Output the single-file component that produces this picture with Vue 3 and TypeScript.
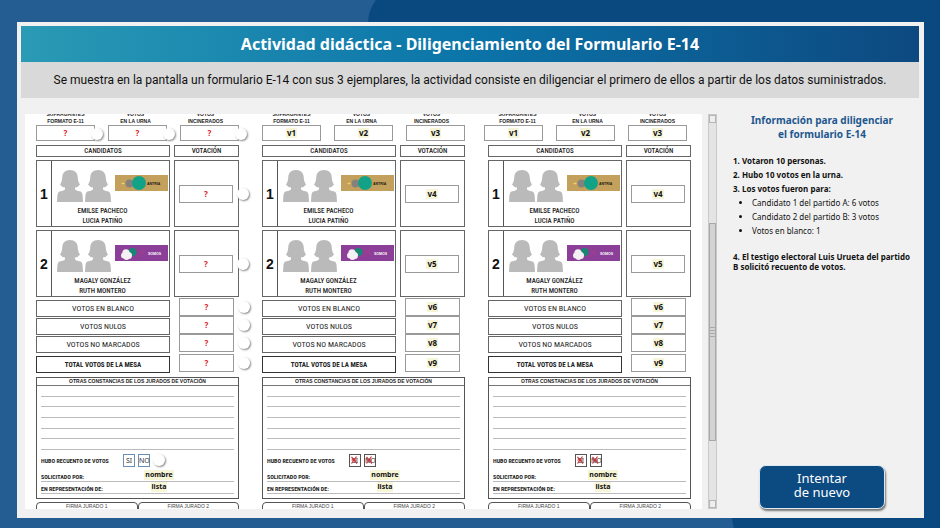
<script setup lang="ts">
interface Candidate {
  id: number
  names: string[]
  party: 'gold' | 'purple'
  value: string
}

interface Row {
  label: string
  value: string
  total?: boolean
}

interface Form {
  id: number
  editable: boolean
}

const forms: Form[] = [
  { id: 1, editable: true },
  { id: 2, editable: false },
  { id: 3, editable: false },
]

const counters = [
  { lines: ['SUFRAGANTES', 'FORMATO E-11'], value: 'v1' },
  { lines: ['VOTOS', 'EN LA URNA'], value: 'v2' },
  { lines: ['VOTOS', 'INCINERADOS'], value: 'v3' },
]

const candidates: Candidate[] = [
  { id: 1, names: ['EMILSE PACHECO', 'LUCIA PATIÑO'], party: 'gold', value: 'v4' },
  { id: 2, names: ['MAGALY GONZÁLEZ', 'RUTH MONTERO'], party: 'purple', value: 'v5' },
]

const rows: Row[] = [
  { label: 'VOTOS EN BLANCO', value: 'v6' },
  { label: 'VOTOS NULOS', value: 'v7' },
  { label: 'VOTOS NO MARCADOS', value: 'v8' },
  { label: 'TOTAL VOTOS DE LA MESA', value: 'v9', total: true },
]

const choices = ['SI', 'NO']
</script>

<template>
  <div class="page">
    <svg class="backdrop" viewBox="0 0 940 528" preserveAspectRatio="none" aria-hidden="true">
      <rect width="940" height="528" fill="#235d91" />
      <path d="M376 0Q368 10 368 24V300H728Q726 505 734 528H940V0Z" fill="#0a4880" />
    </svg>

    <main class="panel">
      <h1 class="title">Actividad didáctica - Diligenciamiento del Formulario E-14</h1>
      <p class="intro">
        Se muestra en la pantalla un formulario E-14 con sus 3 ejemplares, la actividad consiste en
        diligenciar el primero de ellos a partir de los datos suministrados.
      </p>

      <div class="content">
        <section class="viewer">
          <div class="sheet">
            <article v-for="form in forms" :key="form.id" class="form" :class="'form-' + form.id">
              <div class="labels">
                <div v-for="c in counters" :key="c.value" class="label">
                  <div v-for="line in c.lines" :key="line">{{ line }}</div>
                </div>
              </div>
              <div class="counters">
                <div v-for="c in counters" :key="c.value" class="cell">
                  <button v-if="form.editable" type="button" class="value ask">?<i class="curl inner"></i></button>
                  <div v-else class="value"><span class="tag">{{ c.value }}</span></div>
                </div>
              </div>

              <div class="pair heads">
                <div class="box">CANDIDATOS</div>
                <div class="box">VOTACIÓN</div>
              </div>

              <div v-for="cand in candidates" :key="cand.id" class="pair candidate">
                <div class="box card">
                  <div class="number">{{ cand.id }}</div>
                  <div class="who">
                    <div class="pictures">
                      <svg v-for="n in 2" :key="n" class="person" viewBox="0 0 26 32" aria-hidden="true">
                        <path d="M13 0C8 0 5.500 3 5.300 7C5.100 10 4.500 12.500 3 14.500Q4.500 17 8 17.500V19.500Q6.500 21 2.500 21.500Q0.500 22 0.300 27L0 32H26L25.700 27Q25.500 22 23.500 21.500Q19.500 21 18 19.500V17.500Q21.500 17 23 14.500C21.500 12.500 20.900 10 20.700 7C20.500 3 18 0 13 0Z" fill="#bababa" />
                      </svg>
                      <svg class="logo" viewBox="0 0 53 16" aria-hidden="true">
                        <template v-if="cand.party === 'gold'">
                          <rect width="53" height="16" fill="#c3a05c" />
                          <path d="M6 8.500L8 7.500L10 8.500L8 9.500Z" fill="#f3d264" />
                          <circle cx="14.500" cy="8.500" r="4" fill="#85827e" />
                          <circle cx="24" cy="8" r="7" fill="#12a287" />
                          <text x="32" y="9.500" font-size="3.500" font-weight="700" fill="#1d1a12">ANTRIA</text>
                        </template>
                        <template v-else>
                          <rect width="53" height="16" fill="#8c3f98" />
                          <circle cx="17.500" cy="7" r="4" fill="#178774" />
                          <g fill="#f4f0f4">
                            <circle cx="11" cy="7.800" r="3.600" />
                            <circle cx="9" cy="10.500" r="3" />
                            <circle cx="13.500" cy="10.500" r="3.500" />
                            <circle cx="11.500" cy="12" r="3" />
                          </g>
                          <path d="M22 4L30 10M23 12L29 4" stroke="#a93d86" stroke-width="1" />
                          <text x="33" y="9.500" font-size="3.500" font-weight="700" fill="#ffffff">SOMOS</text>
                        </template>
                      </svg>
                    </div>
                    <div class="names">
                      <div v-for="name in cand.names" :key="name">{{ name }}</div>
                    </div>
                  </div>
                </div>
                <div class="box vote">
                  <button v-if="form.editable" type="button" class="value ask">?<i class="curl outer"></i></button>
                  <div v-else class="value"><span class="tag">{{ cand.value }}</span></div>
                </div>
              </div>

              <div class="rows">
                <div v-for="row in rows" :key="row.value" class="pair row" :class="{ total: row.total }">
                  <div class="box name">{{ row.label }}</div>
                  <div class="slot">
                    <button v-if="form.editable" type="button" class="value ask">?<i class="curl outer"></i></button>
                    <div v-else class="value"><span class="tag">{{ row.value }}</span></div>
                  </div>
                </div>
              </div>

              <div class="notes">
                <div class="notes-head">OTRAS CONSTANCIAS DE LOS JURADOS DE VOTACIÓN</div>
                <div class="rules">
                  <div v-for="n in 6" :key="n" class="rule"></div>
                </div>
                <div class="recount">
                  <span class="recount-label">HUBO RECUENTO DE VOTOS</span>
                  <template v-if="form.editable">
                    <button v-for="c in choices" :key="c" type="button" class="choice pick">{{ c }}</button>
                    <i class="curl still"></i>
                  </template>
                  <template v-else>
                    <span v-for="c in choices" :key="c" class="choice">{{ c }}
                      <svg class="cross" viewBox="0 0 10 10" aria-hidden="true">
                        <path d="M1.500 2L7 8.500M6.500 1.500L1.500 8.500M1.500 5L6.500 5" stroke="#c8373c" stroke-width="1.200" fill="none" />
                      </svg>
                    </span>
                  </template>
                </div>
                <div class="line">
                  <span class="line-label">SOLICITADO POR:</span>
                  <span class="answer"><span class="tag">nombre</span></span>
                </div>
                <div class="line">
                  <span class="line-label">EN REPRESENTACIÓN DE:</span>
                  <span class="answer"><span class="tag">lista</span></span>
                </div>
              </div>

              <div class="signatures">
                <div>FIRMA JURADO 1</div>
                <div>FIRMA JURADO 2</div>
              </div>
            </article>
          </div>
        </section>

        <div class="scrollbar" aria-hidden="true">
          <div class="arrow"></div>
          <div class="track"></div>
          <div class="thumb"><i></i><i></i><i></i><i></i></div>
          <div class="track low"></div>
          <div class="arrow"></div>
        </div>

        <aside class="info">
          <h2>Información para diligenciar<br />el formulario E-14</h2>
          <p>1. Votaron 10 personas.</p>
          <p>2. Hubo 10 votos en la urna.</p>
          <p>3. Los votos fueron para:</p>
          <ul>
            <li>Candidato 1 del partido A: 6 votos</li>
            <li>Candidato 2 del partido B: 3 votos</li>
            <li>Votos en blanco: 1</li>
          </ul>
          <p class="last">4. El testigo electoral Luis Urueta del partido B solicitó recuento de votos.</p>
          <button type="button" class="retry">Intentar<br />de nuevo</button>
        </aside>
      </div>
    </main>
  </div>
</template>

<style>
body {
  margin: 0;
}
</style>

<style scoped>
* {
  box-sizing: border-box;
}

.page {
  position: relative;
  display: flex;
  height: 100vh;
  padding: 22px 16px 10px 17px;
  font-family: "Noto Sans", "Open Sans", sans-serif;
  color: #111;
  overflow: hidden;
}

.backdrop {
  position: absolute;
  inset: 0;
  width: 100%;
  height: 100%;
}

.panel {
  position: relative;
  flex: 1;
  min-width: 0;
  display: flex;
  flex-direction: column;
  padding: 4px 5px 0 4px;
  background: #f1f1f1;
}

.title {
  margin: 0;
  font-size: 16px;
  line-height: 36px;
  font-weight: 700;
  text-align: center;
  color: #fff;
  background: linear-gradient(90deg, #2a9ab5 0%, #0b74a9 50%, #0d4980 100%);
}

.intro {
  margin: 0;
  font-family: Roboto, sans-serif;
  font-size: 12px;
  line-height: 36px;
  text-align: center;
  white-space: nowrap;
  background: #d9d9d9;
}

.content {
  flex: 1;
  min-height: 0;
  display: flex;
  padding: 16px 0 9px 4px;
}

.viewer {
  flex: 1;
  min-width: 0;
  overflow: hidden;
  background: #fff;
}

.sheet {
  display: grid;
  grid-template-columns: repeat(3, 1fr);
  gap: 23px;
  margin-top: -3px;
  padding: 0 11px;
  font-family: "Roboto Condensed", Roboto, "Liberation Sans", sans-serif;
  font-size: 6px;
  color: #222;
}

.labels,
.counters {
  display: grid;
  grid-template-columns: repeat(3, 59px);
}

.labels {
  gap: 11px;
  font-family: "Liberation Sans", Arial, sans-serif;
  font-size: 5px;
  line-height: 7px;
  font-weight: 700;
  text-align: center;
}

.label {
  white-space: nowrap;
}

.counters {
  gap: 13px;
  margin-bottom: 4px;
}

.form-3 .counters {
  margin-left: -4px;
}

.value {
  position: relative;
  display: flex;
  align-items: center;
  justify-content: center;
  width: 100%;
  height: 16px;
  padding: 0;
  border: 1px solid #9a9a9a;
  background: #fff;
  font-family: "Noto Sans", "Open Sans", sans-serif;
  font-size: 8px;
  line-height: 10px;
  font-weight: 700;
  color: #111;
}

.ask {
  color: #d8232a;
}

.tag {
  padding: 0 1px;
  font-family: "Noto Sans", "Open Sans", sans-serif;
  font-size: 8px;
  line-height: 10px;
  font-weight: 700;
  color: #111;
  background: #f6f5d8;
}

.curl {
  width: 12px;
  height: 12px;
  border-radius: 50%;
  background: #fff;
  box-shadow: 1px 1px 2px #888;
}

.inner {
  position: absolute;
  right: -9px;
  top: 2px;
}

.outer {
  position: absolute;
  right: -17px;
  top: 2px;
}

.pair {
  display: grid;
  grid-template-columns: 134fr 65fr;
  gap: 4px;
}

.box {
  border: 1px solid #666;
}

.heads {
  font-size: 7px;
  font-weight: 500;
  line-height: 10px;
  text-align: center;
}

.candidate {
  margin-top: 3px;
}

.candidate .box {
  height: 67px;
}

.card {
  display: flex;
}

.number {
  display: flex;
  align-items: center;
  justify-content: center;
  width: 15px;
  border-right: 1px solid #555;
  font-family: "Liberation Sans", Arial, sans-serif;
  font-size: 14px;
  font-weight: 700;
  color: #111;
}

.who {
  flex: 1;
}

.pictures {
  display: flex;
  gap: 2px;
  padding: 9px 0 0 5px;
}

.person {
  width: 26px;
  height: 32px;
}

.logo {
  width: 53px;
  height: 16px;
  margin: 5px 0 0 2px;
  font-family: "Liberation Sans", Arial, sans-serif;
}

.names {
  margin: 4px 16px 0 0;
  font-size: 7px;
  font-weight: 500;
  line-height: 10px;
  text-align: center;
}

.slot {
  margin-top: -1px;
  padding: 0 5px;
}

.vote {
  display: flex;
  align-items: center;
  padding: 0 5px 0 4px;
}

.vote .value {
  height: 18px;
}

.rows {
  margin-top: 2px;
}

.row .name {
  display: flex;
  align-items: center;
  justify-content: center;
  height: 17px;
  margin-top: 1px;
  font-size: 8px;
}

.row {
  height: 18px;
}

.row .value {
  height: 18px;
}

.total {
  margin-top: 2px;
}

.total .name {
  font-size: 7px;
  font-weight: 700;
  border-color: #333;
}

.notes {
  height: 122px;
  margin-top: 4px;
  border: 1px solid #555;
}

.notes-head {
  height: 8px;
  border-bottom: 1px solid #777;
  font-family: "Liberation Sans", Arial, sans-serif;
  font-size: 5px;
  line-height: 7px;
  font-weight: 700;
  text-align: center;
  white-space: nowrap;
}

.rules {
  display: flex;
  flex-direction: column;
  height: 64px;
  padding: 0 4px;
}

.rule {
  flex: 1;
  border-bottom: 1px solid #bbb;
}

.recount {
  display: flex;
  align-items: center;
  gap: 3px;
  height: 20px;
  padding-left: 4px;
}

.recount-label {
  width: 79px;
  font-weight: 700;
  white-space: nowrap;
}

.choice {
  position: relative;
  width: 12px;
  height: 13px;
  padding: 0;
  border: 1px solid #555;
  background: #fff;
  font-family: "Noto Sans", "Open Sans", sans-serif;
  font-size: 7px;
  line-height: 11px;
  text-align: center;
  color: #333;
}

.pick {
  border-color: #6a8fb5;
}

.cross {
  position: absolute;
  left: 0;
  top: 0;
  width: 10px;
  height: 10px;
}

.line {
  display: flex;
  height: 12px;
  margin: 0 4px;
  border-bottom: 1px solid #bbb;
  line-height: 10px;
}

.line-label {
  width: 97px;
  padding-top: 2px;
  font-weight: 700;
  white-space: nowrap;
}

.form-3 .line-label {
  width: 89px;
}

.answer {
  display: flex;
  justify-content: center;
  width: 42px;
  height: 10px;
}

.answer .tag {
  font-size: 7px;
}

.signatures {
  display: grid;
  grid-template-columns: 1fr 1fr;
  margin-top: 3px;
  font-family: "Liberation Sans", Arial, sans-serif;
  font-size: 5px;
  line-height: 7px;
  text-align: center;
  color: #444;
}

.signatures div {
  height: 20px;
  border: 1px solid #555;
  border-radius: 4px 4px 0 0;
}

.scrollbar {
  display: flex;
  flex-direction: column;
  width: 9px;
  margin-left: 6px;
  background: #e4e4e4;
  border: 1px solid #c9c9c9;
}

.arrow {
  height: 8px;
  border: 1px solid #b5b5b5;
  background: #eee;
}

.track {
  flex: 101;
}

.low {
  flex: 59;
}

.thumb {
  flex: 217;
  display: flex;
  flex-direction: column;
  align-items: center;
  justify-content: center;
  gap: 2px;
  border: 1px solid #a9a9a9;
  background: #d3d3d3;
}

.thumb i {
  width: 7px;
  height: 1px;
  background: #aaa;
}

.info {
  display: flex;
  flex-direction: column;
  width: 202px;
  padding: 0 8px 0 16px;
  font-size: 8px;
  line-height: 14px;
}

.info h2 {
  margin: -1px 0 13px;
  font-size: 10px;
  line-height: 14px;
  font-weight: 700;
  text-align: center;
  color: #22588f;
}

.info p {
  margin: 0;
  font-weight: 700;
}

.info ul {
  margin: 0;
  padding-left: 19px;
}

.info .last {
  margin-top: 14px;
  line-height: 10px;
}

.retry {
  align-self: center;
  width: 126px;
  height: 44px;
  margin: auto 0 0;
  padding: 0 0 4px;
  border: 1px solid #dfe9f3;
  border-radius: 7px;
  background: #0c4a82;
  box-shadow: 1px 2px 2px #777;
  color: #fff;
  font-family: "Noto Sans", "Open Sans", sans-serif;
  font-size: 13px;
  line-height: 14px;
}
</style>
